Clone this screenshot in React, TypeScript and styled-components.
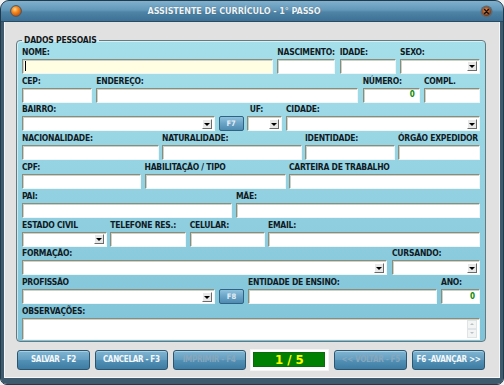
import React from "react";
import styled, { createGlobalStyle } from "styled-components";

const FONT = `"Liberation Sans Narrow", "DejaVu Sans Condensed", "Liberation Sans", Arial, sans-serif`;

const GlobalStyle = createGlobalStyle`
  html, body { margin: 0; padding: 0; background: #f2f2f2; }
  body { font-family: ${FONT}; }
  *, *::before, *::after { box-sizing: border-box; }
`;

const Window = styled.div`
  width: 504px;
  height: 385px;
  border: 1px solid #22394a;
  border-radius: 9px 9px 7px 7px;
  overflow: hidden;
  display: flex;
  flex-direction: column;
  background: #3e5a6c;
`;

const TitleBar = styled.div`
  height: 21px;
  flex: none;
  display: flex;
  align-items: center;
  padding: 0 10px 0 9px;
  background: linear-gradient(#80b1ce 0%, #6398b9 45%, #4f84a7 55%, #3c7094 100%);
  border-bottom: 1px solid #2c4a5e;
`;

const TitleText = styled.div`
  flex: 1;
  text-align: center;
  padding-right: 34px;
  font: bold 9px/1 ${FONT};
  color: #eef3f6;
  letter-spacing: -0.1px;
  text-shadow: 0 0 1px rgba(20, 50, 70, 0.6);
`;

const Body = styled.div`
  flex: 1;
  background: #e1e1e1;
  border-style: solid;
  border-color: #3e5a6c;
  border-width: 0 3px 6px 3px;
  box-shadow: inset 1px 0 0 #f7f7f7, inset -1px 0 0 #f7f7f7, inset 0 -1px 0 #f7f7f7;
  padding: 13px 14px 7px 12px;
  display: flex;
  flex-direction: column;
`;

const Panel = styled.fieldset`
  margin: 0;
  padding: 0 5px 1px 5px;
  min-width: 0;
  border: 1px solid #66797f;
  border-radius: 4px;
  background: linear-gradient(#a5dfea, #80c3d8);
  box-shadow: inset 1px 1px 0 rgba(255, 255, 255, 0.55);
  display: flex;
  flex-direction: column;
`;

const Legend = styled.legend`
  font: bold 8.5px/10px ${FONT};
  letter-spacing: -0.2px;
  color: #101820;
  padding: 0 2px;
  margin: 0;
`;

const Row = styled.div`
  display: flex;
  justify-content: space-between;
  align-items: flex-end;
`;

const Field = styled.div<{ $w: number }>`
  width: ${(p) => p.$w}px;
  flex: none;
  display: flex;
  flex-direction: column;
`;

const Label = styled.div`
  height: 13.8px;
  display: flex;
  align-items: flex-end;
  padding-bottom: 2px;
  font: bold 8.5px/9px ${FONT};
  letter-spacing: -0.25px;
  color: #111a24;
  white-space: nowrap;
`;

const Box = styled.div<{ $bg?: string; $h?: number }>`
  height: ${(p) => p.$h ?? 15}px;
  background: ${(p) => p.$bg ?? "#ffffff"};
  border: 1px solid;
  border-color: #878d7f #eef6f8 #eef6f8 #878d7f;
  box-shadow: inset 1px 1px 0 #cdd1c6;
  display: flex;
  align-items: center;
`;

const SelectBox = styled(Box)`
  justify-content: flex-end;
  padding-right: 2px;
`;

const NumberBox = styled(Box)`
  justify-content: flex-end;
  padding-right: 4px;
  font: bold 8px/1 ${FONT};
  color: #0a8a0a;
`;

const Caret = styled.span`
  width: 1px;
  height: 10px;
  margin-left: 2px;
  background: #000;
`;

const DropBtn = styled.span`
  width: 10px;
  height: 10px;
  background: #e8e8e8;
  border: 1px solid;
  border-color: #ffffff #6b6b6b #6b6b6b #ffffff;
  display: flex;
  align-items: center;
  justify-content: center;
  &::after {
    content: "";
    border-left: 3px solid transparent;
    border-right: 3px solid transparent;
    border-top: 3px solid #000;
    margin-top: 1px;
  }
`;

const TextArea = styled(Box)`
  justify-content: flex-end;
  align-items: stretch;
  padding: 1px 2px 1px 0;
`;

const ScrollCol = styled.div`
  width: 10px;
  display: flex;
  flex-direction: column;
  justify-content: space-between;
`;

const ScrollArrow = styled.span<{ $up?: boolean }>`
  height: 9px;
  background: #f3f5f5;
  border: 1px solid #dfe4e6;
  display: flex;
  align-items: center;
  justify-content: center;
  &::after {
    content: "";
    border-left: 2.5px solid transparent;
    border-right: 2.5px solid transparent;
    ${(p) => (p.$up ? "border-bottom: 2.5px solid #b9c2c6;" : "border-top: 2.5px solid #b9c2c6;")}
  }
`;

const FKey = styled.button`
  width: 25px;
  height: 15px;
  flex: none;
  padding: 0;
  border: 1px solid #2f6283;
  border-radius: 2px;
  background: linear-gradient(#8fc2dd 0%, #6aa3c6 50%, #4f8bb1 100%);
  color: #e4eef5;
  font: bold 7.5px/1 ${FONT};
`;

const ButtonBar = styled.div`
  display: flex;
  justify-content: space-between;
  align-items: center;
  margin: 7px 1px 0 1px;
`;

const ActionButton = styled.button<{ $off?: boolean }>`
  width: 73px;
  height: 20px;
  padding: 0;
  border: 1px solid #2b5670;
  border-radius: 3px;
  background: linear-gradient(#80b5d2 0%, #639dc0 48%, #5290b6 52%, #3f7ca3 100%);
  box-shadow: inset 0 1px 0 rgba(255, 255, 255, 0.35);
  color: ${(p) => (p.$off ? "#86a7bc" : "#f4f8fa")};
  font: bold 8px/1 ${FONT};
  letter-spacing: -0.3px;
  white-space: nowrap;
  overflow: hidden;
`;

const Counter = styled.div`
  width: 79px;
  height: 22px;
  background: #ffffff;
  border: 1px solid #f4f4f4;
  padding: 2px 3px 3px 2px;
  display: flex;
`;

const CounterInner = styled.div`
  flex: 1;
  background: #008000;
  border: 1px solid #0b6a0b;
  color: #ffff00;
  font: bold 13px/1 ${FONT};
  display: flex;
  align-items: center;
  justify-content: center;
`;

const OrangeDot = () => (
  <svg width="12" height="12" viewBox="0 0 12 12">
    <defs>
      <radialGradient id="og" cx="40%" cy="35%" r="65%">
        <stop offset="0%" stopColor="#ffd38a" />
        <stop offset="45%" stopColor="#f58a1f" />
        <stop offset="100%" stopColor="#c44e08" />
      </radialGradient>
    </defs>
    <circle cx="6" cy="6" r="5.4" fill="url(#og)" stroke="#44596a" strokeWidth="1" />
  </svg>
);

const CloseIcon = () => (
  <svg width="13" height="13" viewBox="0 0 13 13">
    <defs>
      <radialGradient id="cg" cx="45%" cy="40%" r="60%">
        <stop offset="0%" stopColor="#e9a060" />
        <stop offset="60%" stopColor="#b55a22" />
        <stop offset="100%" stopColor="#6d3412" />
      </radialGradient>
    </defs>
    <circle cx="6.5" cy="6.5" r="6" fill="#5b6a74" />
    <circle cx="6.5" cy="6.5" r="4.4" fill="url(#cg)" />
    <path d="M4.6 4.6 L8.4 8.4 M8.4 4.6 L4.6 8.4" stroke="#111" strokeWidth="1.4" strokeLinecap="round" />
  </svg>
);

const Select = () => (
  <SelectBox>
    <DropBtn />
  </SelectBox>
);

export default function App() {
  return (
    <>
      <GlobalStyle />
      <Window>
        <TitleBar>
          <OrangeDot />
          <TitleText>ASSISTENTE DE CURRÍCULO - 1° PASSO</TitleText>
          <CloseIcon />
        </TitleBar>
        <Body>
          <Panel>
            <Legend>DADOS PESSOAIS</Legend>
            <Row>
              <Field $w={251}>
                <Label>NOME:</Label>
                <Box $bg="#fffde2">
                  <Caret />
                </Box>
              </Field>
              <Field $w={58}>
                <Label>NASCIMENTO:</Label>
                <Box />
              </Field>
              <Field $w={56}>
                <Label>IDADE:</Label>
                <Box />
              </Field>
              <Field $w={80}>
                <Label>SEXO:</Label>
                <Select />
              </Field>
            </Row>
            <Row>
              <Field $w={70}>
                <Label>CEP:</Label>
                <Box />
              </Field>
              <Field $w={262}>
                <Label>ENDEREÇO:</Label>
                <Box />
              </Field>
              <Field $w={57}>
                <Label>NÚMERO:</Label>
                <NumberBox>0</NumberBox>
              </Field>
              <Field $w={56}>
                <Label>COMPL.</Label>
                <Box />
              </Field>
            </Row>
            <Row>
              <Field $w={193}>
                <Label>BAIRRO:</Label>
                <Select />
              </Field>
              <FKey>F7</FKey>
              <Field $w={35}>
                <Label>&nbsp;UF:</Label>
                <Select />
              </Field>
              <Field $w={194}>
                <Label>CIDADE:</Label>
                <Select />
              </Field>
            </Row>
            <Row>
              <Field $w={137}>
                <Label>NACIONALIDADE:</Label>
                <Box />
              </Field>
              <Field $w={140}>
                <Label>NATURALIDADE:</Label>
                <Box />
              </Field>
              <Field $w={90}>
                <Label>IDENTIDADE:</Label>
                <Box />
              </Field>
              <Field $w={82}>
                <Label>ÓRGÃO EXPEDIDOR</Label>
                <Box />
              </Field>
            </Row>
            <Row>
              <Field $w={119}>
                <Label>CPF:</Label>
                <Box />
              </Field>
              <Field $w={141}>
                <Label>HABILITAÇÃO / TIPO</Label>
                <Box />
              </Field>
              <Field $w={191}>
                <Label>CARTEIRA DE TRABALHO</Label>
                <Box />
              </Field>
            </Row>
            <Row>
              <Field $w={210}>
                <Label>PAI:</Label>
                <Box />
              </Field>
              <Field $w={244}>
                <Label>MÃE:</Label>
                <Box />
              </Field>
            </Row>
            <Row>
              <Field $w={85}>
                <Label>ESTADO CIVIL</Label>
                <Select />
              </Field>
              <Field $w={76}>
                <Label>TELEFONE RES.:</Label>
                <Box />
              </Field>
              <Field $w={75}>
                <Label>CELULAR:</Label>
                <Box />
              </Field>
              <Field $w={212}>
                <Label>EMAIL:</Label>
                <Box />
              </Field>
            </Row>
            <Row>
              <Field $w={365}>
                <Label>FORMAÇÃO:</Label>
                <Select />
              </Field>
              <Field $w={88}>
                <Label>CURSANDO:</Label>
                <Select />
              </Field>
            </Row>
            <Row>
              <Field $w={193}>
                <Label>PROFISSÃO</Label>
                <Select />
              </Field>
              <FKey>F8</FKey>
              <Field $w={189}>
                <Label>ENTIDADE DE ENSINO:</Label>
                <Box />
              </Field>
              <Field $w={39}>
                <Label>ANO:</Label>
                <NumberBox>0</NumberBox>
              </Field>
            </Row>
            <Row>
              <Field $w={458}>
                <Label>OBSERVAÇÕES:</Label>
                <TextArea $h={22}>
                  <ScrollCol>
                    <ScrollArrow $up />
                    <ScrollArrow />
                  </ScrollCol>
                </TextArea>
              </Field>
            </Row>
          </Panel>
          <ButtonBar>
            <ActionButton>SALVAR - F2</ActionButton>
            <ActionButton>CANCELAR - F3</ActionButton>
            <ActionButton $off>IMPRIMIR - F4</ActionButton>
            <Counter>
              <CounterInner>1 / 5</CounterInner>
            </Counter>
            <ActionButton $off>&lt;&lt; VOLTAR - F5</ActionButton>
            <ActionButton>F6 -AVANÇAR &gt;&gt;</ActionButton>
          </ButtonBar>
        </Body>
      </Window>
    </>
  );
}
